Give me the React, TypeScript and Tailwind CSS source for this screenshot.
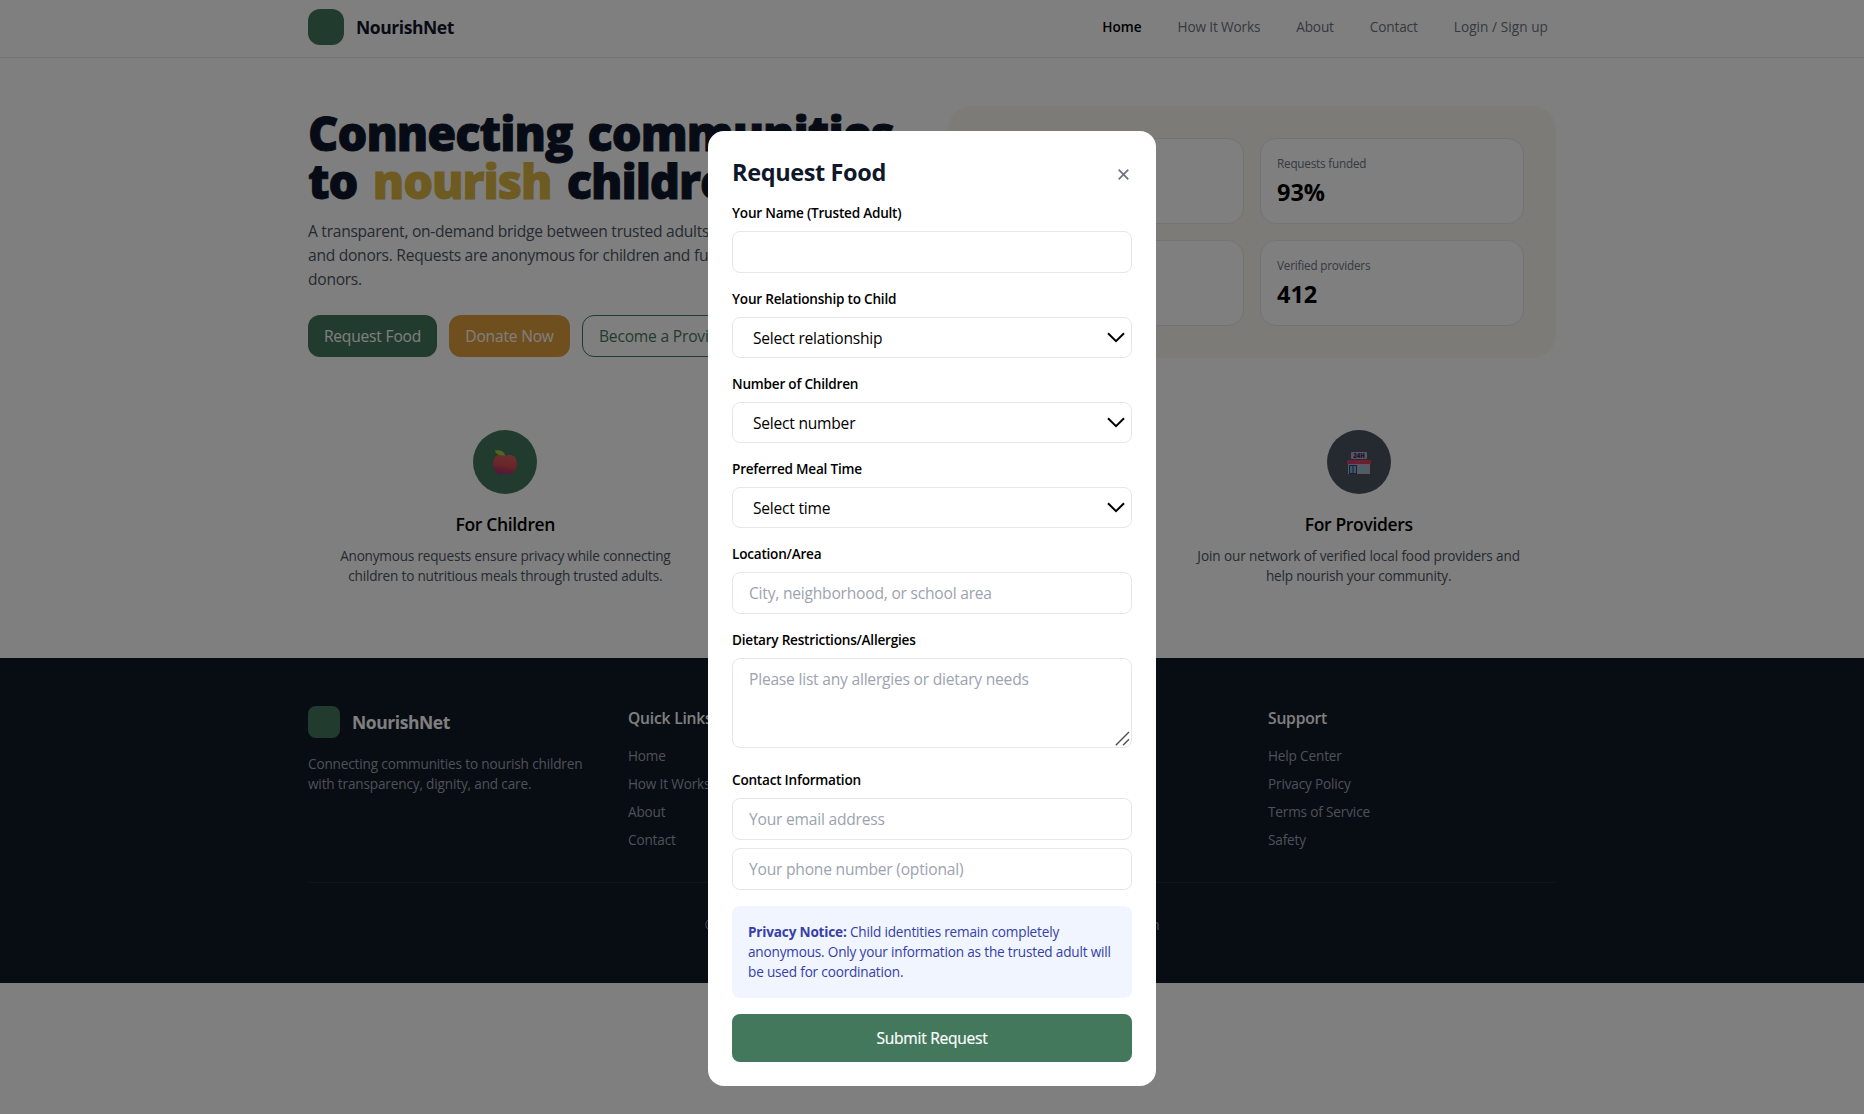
import type { ReactNode } from "react";

function AppleIcon() {
  return (
    <svg width="24" height="25" viewBox="0 0 24 25" aria-hidden="true">
      <defs>
        <linearGradient id="apple" x1="0.6" y1="0" x2="0.4" y2="1">
          <stop offset="0" stopColor="#d8605c" />
          <stop offset="0.55" stopColor="#d44a50" />
          <stop offset="0.75" stopColor="#b83a5c" />
          <stop offset="1" stopColor="#9c3488" />
        </linearGradient>
      </defs>
      <path
        d="M12 5.600C14 5 17 4.500 19.500 5.400 22.800 6.800 24 10 23.800 14.200 23.500 19 21.500 23.700 17.500 24.400 15.600 24.700 14 24.100 12 24.100S8.400 24.700 6.500 24.400C2.500 23.700.5 19 .2 14.200 0 10 1.200 6.800 4.500 5.400 7 4.500 10 5 12 5.600Z"
        fill="url(#apple)"
      />
      <path d="M1.700.4C6.500-.4 11.200.6 12 5.400 7 6 3 4.400 1.700.4Z" fill="#a6c83e" />
    </svg>
  );
}

function StoreIcon() {
  return (
    <svg width="24" height="22" viewBox="0 0 24 22" aria-hidden="true">
      <defs>
        <linearGradient id="roof" x1="0" y1="0" x2="1" y2="0">
          <stop offset="0" stopColor="#cc3c78" />
          <stop offset="1" stopColor="#d8444c" />
        </linearGradient>
      </defs>
      <rect x="4" y="0" width="16" height="7" rx="0.800" fill="#b8a8c4" />
      <text
        x="12"
        y="5.800"
        textAnchor="middle"
        fontFamily="Open Sans, sans-serif"
        fontSize="6"
        fontWeight="800"
        fill="#3c2a5a"
      >
        24H
      </text>
      <rect x="1" y="11" width="22" height="11" fill="#b8aec0" />
      <rect x="0" y="8" width="24" height="4" fill="url(#roof)" />
      <rect x="2" y="13" width="8" height="9" fill="#2c406c" />
      <rect x="3" y="14" width="2.500" height="7" fill="#78b0d4" />
      <rect x="6.500" y="14" width="2.500" height="7" fill="#78b0d4" />
      <rect x="12" y="15" width="8" height="4" fill="#80c8dc" />
    </svg>
  );
}

function HeartIcon() {
  return (
    <svg width="24" height="24" viewBox="0 0 24 24" aria-hidden="true">
      <path d="M12 21C5 16 2 12 2 8a5 5 0 0 1 10-1 5 5 0 0 1 10 1c0 4-3 8-10 13Z" fill="#fff" />
    </svg>
  );
}

function Header() {
  return (
    <header className="h-[58px] border-b border-[#e5e7eb] bg-white">
      <div className="mx-auto flex h-[54px] max-w-7xl items-center justify-between px-4">
        <div className="flex items-center gap-3">
          <div className="size-9 rounded-xl bg-[#43785c]" />
          <span className="text-[17.5px] leading-7 font-bold tracking-[-0.025em] text-[#0f172a]">NourishNet</span>
        </div>
        <nav className="flex items-center gap-5 text-[13.6px] leading-5 tracking-[-0.010em] text-[#6b7280]">
          <a className="px-2 font-semibold tracking-[0em] text-black">Home</a>
          <a className="px-2">How It Works</a>
          <a className="px-2">About</a>
          <a className="px-2">Contact</a>
          <a className="px-2 tracking-[0.005em]">Login / Sign up</a>
        </nav>
      </div>
    </header>
  );
}

function Stat({ label, value }: { label: string; value: string }) {
  return (
    <div className="h-[86px] rounded-2xl border border-[#e5e7eb] bg-white p-4">
      <div className="text-[11.7px] leading-4 tracking-[-0.016em] text-[#6b7280]">{label}</div>
      <div className="mt-[5px] text-[23.5px] leading-8 font-bold text-black">{value}</div>
    </div>
  );
}

function Hero() {
  return (
    <section className="mx-auto grid max-w-7xl grid-cols-2 items-center gap-8 px-4 py-12">
      <div>
        <h1 className="-mb-0.5 pt-0.5 text-[47px] leading-[48px] font-extrabold tracking-[-0.022em] whitespace-nowrap text-[#0f172a] [-webkit-text-stroke-width:0.9px] [word-spacing:4px]">
          Connecting communities
          <br />
          to <span className="text-[#dcb642]">nourish</span> children
        </h1>
        <p className="mt-4 text-[15.6px] leading-6 tracking-[-0.0175em] whitespace-nowrap text-[#4b5563]">
          A transparent, on-demand bridge between trusted adults, food providers,
          <br />
          and donors. Requests are anonymous for children and fully transparent for
          <br />
          donors.
        </p>
        <div className="mt-6 flex gap-3 text-[15.6px] leading-6 tracking-[-0.013em] whitespace-nowrap">
          <button className="h-[42px] w-[129px] rounded-xl bg-[#43785c] text-white">Request Food</button>
          <button className="h-[42px] w-[121px] rounded-xl bg-[#e09e3e] text-white">Donate Now</button>
          <button className="h-[42px] rounded-xl border border-[#43785c] px-4 text-[#43785c]">Become a Provider</button>
        </div>
      </div>
      <div className="grid grid-cols-2 gap-4 rounded-3xl bg-[#f9f6ee] p-8">
        <Stat label="Meals delivered" value="12,480" />
        <Stat label="Requests funded" value="93%" />
        <Stat label="Active donors" value="1,204" />
        <Stat label="Verified providers" value="412" />
      </div>
    </section>
  );
}

function Feature({ icon, circle, title, children }: { icon: ReactNode; circle: string; title: string; children: ReactNode }) {
  return (
    <div className="flex flex-col items-center p-6 text-center">
      <div className={`flex size-16 items-center justify-center rounded-full ${circle}`}>{icon}</div>
      <h3 className="mt-4 text-[17.5px] leading-7 font-semibold tracking-[-0.020em] text-black">{title}</h3>
      <p className="mt-2 text-[13.6px] leading-5 tracking-[-0.015em] whitespace-nowrap text-[#4b5563]">{children}</p>
    </div>
  );
}

function Features() {
  return (
    <section className="mx-auto grid max-w-7xl grid-cols-3 gap-8 px-4 pb-12">
      <Feature icon={<AppleIcon />} circle="bg-[#43785c] pt-px" title="For Children">
        Anonymous requests ensure privacy while connecting
        <br />
        children to nutritious meals through trusted adults.
      </Feature>
      <Feature icon={<HeartIcon />} circle="bg-[#e09e3e]" title="For Donors">
        Fund meals directly and see the
        <br />
        impact of every donation.
      </Feature>
      <Feature icon={<StoreIcon />} circle="bg-[#4b5563] pt-0.5" title="For Providers">
        <span className="tracking-[-0.009em]">Join our network of verified local food providers and</span>
        <br />
        help nourish your community.
      </Feature>
    </section>
  );
}

function LinkColumn({ title, links }: { title: string; links: string[] }) {
  return (
    <div>
      <h4 className="text-[15.6px] leading-6 font-semibold tracking-[-0.012em] text-white">{title}</h4>
      <ul className="mt-4 flex flex-col gap-2 text-[13.6px] leading-5 tracking-[-0.012em] text-[#9ca3af]">
        {links.map((link) => (
          <li key={link}>{link}</li>
        ))}
      </ul>
    </div>
  );
}

function Footer() {
  return (
    <footer className="bg-[#111827] py-12">
      <div className="mx-auto max-w-7xl px-4">
        <div className="grid grid-cols-4 gap-8">
          <div>
            <div className="flex items-center gap-3">
              <div className="size-8 rounded-lg bg-[#43785c]" />
              <span className="text-[17.5px] leading-7 font-bold tracking-[-0.025em] text-white">NourishNet</span>
            </div>
            <p className="mt-4 text-[13.6px] leading-5 tracking-[-0.012em] text-[#9ca3af]">
              Connecting communities to nourish children
              <br />
              with transparency, dignity, and care.
            </p>
          </div>
          <LinkColumn title="Quick Links" links={["Home", "How It Works", "About", "Contact"]} />
          <LinkColumn title="Get Involved" links={["Request Food", "Donate", "Volunteer", "Partner"]} />
          <LinkColumn title="Support" links={["Help Center", "Privacy Policy", "Terms of Service", "Safety"]} />
        </div>
        <div className="mt-8 border-t border-[#1f2937] pt-8 text-center text-[13.6px] leading-5 tracking-[-0.021em] text-[#9ca3af]">
          © 2024 NourishNet. All rights reserved. | Building a hunger-free generation
        </div>
      </div>
    </footer>
  );
}

function Field({ label, children }: { label: string; children: ReactNode }) {
  return (
    <div>
      <label className="block text-[13.6px] leading-5 font-semibold tracking-[-0.017em] text-black">{label}</label>
      <div className="mt-2">{children}</div>
    </div>
  );
}

function TextInput({ placeholder }: { placeholder?: string }) {
  return (
    <input
      placeholder={placeholder}
      className="block h-[42px] w-full rounded-lg border border-[#e5e7eb] bg-white px-4 text-[15.6px] leading-6 tracking-[-0.014em] text-black placeholder:text-[#9ca3af]"
    />
  );
}

function SelectInput({ value }: { value: string }) {
  return (
    <div className="relative">
      <select className="block h-[41px] w-full appearance-none rounded-lg border border-[#e5e7eb] bg-white px-5 text-[15.6px] leading-6 tracking-[-0.015em] text-black">
        <option>{value}</option>
      </select>
      <svg className="absolute top-[15px] right-[7px]" width="18" height="11" viewBox="0 0 18 11" fill="none">
        <path d="M1 1.200 9 9.200 17 1.200" stroke="#000" strokeWidth="2" />
      </svg>
    </div>
  );
}

function RequestModal() {
  return (
    <div className="fixed inset-0 flex items-start justify-center overflow-hidden bg-black/50 pt-[131px]">
      <div className="h-[955px] w-md rounded-2xl bg-white p-6">
        <div className="flex h-8 items-center justify-between">
          <h2 className="pt-0.5 text-[23.5px] leading-8 font-bold tracking-[-0.016em] text-[#0f172a]">Request Food</h2>
          <button aria-label="Close" className="mt-[7px] mr-[3px]">
            <svg width="11" height="11" viewBox="0 0 11 11" fill="none">
              <path d="M.7.700 10.300 10.300M10.300.7.700 10.300" stroke="#6b7280" strokeWidth="1.700" />
            </svg>
          </button>
        </div>
        <form className="mt-4 flex flex-col gap-4">
          <Field label="Your Name (Trusted Adult)">
            <TextInput />
          </Field>
          <Field label="Your Relationship to Child">
            <SelectInput value="Select relationship" />
          </Field>
          <Field label="Number of Children">
            <SelectInput value="Select number" />
          </Field>
          <Field label="Preferred Meal Time">
            <SelectInput value="Select time" />
          </Field>
          <Field label="Location/Area">
            <TextInput placeholder="City, neighborhood, or school area" />
          </Field>
          <Field label="Dietary Restrictions/Allergies">
            <div className="relative mb-1.5">
              <textarea
                placeholder="Please list any allergies or dietary needs"
                className="block h-[90px] w-full resize-none rounded-lg border border-[#e5e7eb] bg-white px-4 py-2 text-[15.6px] leading-6 tracking-[-0.014em] text-black placeholder:text-[#9ca3af]"
              />
              <svg className="absolute right-[2px] bottom-[2px]" width="15" height="15" viewBox="0 0 15 15" fill="none">
                <path d="M.8 14.200 14 1M8 14.200 14 8.200" stroke="#505050" strokeWidth="1.400" />
              </svg>
            </div>
          </Field>
          <Field label="Contact Information">
            <div className="flex flex-col gap-2">
              <TextInput placeholder="Your email address" />
              <TextInput placeholder="Your phone number (optional)" />
            </div>
          </Field>
          <div className="h-[92px] rounded-lg bg-[#f0f5ff] p-4 text-[13.6px] leading-5 tracking-[-0.014em] whitespace-nowrap text-[#3640a8]">
            <strong className="font-bold">Privacy Notice:</strong> Child identities remain completely
            <br />
            anonymous. Only your information as the trusted adult will
            <br />
            be used for coordination.
          </div>
          <button
            type="button"
            className="h-12 rounded-lg bg-[#43785c] text-[15.6px] leading-6 font-medium tracking-[-0.018em] text-white [-webkit-text-stroke-width:0.2px]"
          >
            Submit Request
          </button>
        </form>
      </div>
    </div>
  );
}

export default function App() {
  return (
    <div className="h-[1114px] overflow-hidden bg-white font-['Open_Sans','Noto_Sans',sans-serif]">
      <Header />
      <main>
        <Hero />
        <Features />
      </main>
      <Footer />
      <RequestModal />
    </div>
  );
}
